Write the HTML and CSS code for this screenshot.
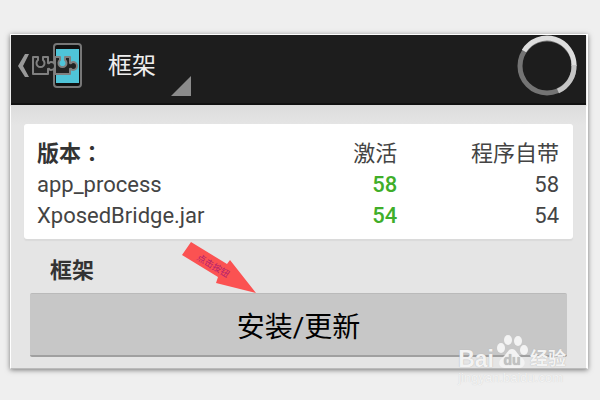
FILE: index.html
```
<!DOCTYPE html>
<html lang="zh-CN">
<head>
  <meta charset="UTF-8" />
  <meta name="viewport" content="width=device-width, initial-scale=1.0"/>
  <title>框架</title>
  <link rel="stylesheet" href="styles.css">
</head>
<body>
  <div class="screen">
    <header>
      <a href="#" class="home" aria-label="返回">
        <svg width="66" height="48" viewBox="0 0 66 48" fill="none">
          <path d="M11 12 H7 L0 24 L7 35 H11 L5 24 Z" fill="#999"/>
          <rect x="36" y="2" width="27" height="43" rx="3" fill="#111" stroke="#777" stroke-width="2"/>
          <rect x="38" y="7" width="23" height="34" fill="#4fc4d8"/>
          <g stroke="#808080" stroke-width="2" stroke-linejoin="round" fill="#222">
            <path d="M37 15 H42 V18 A4 4 0 1 0 47 18 V15 H52 V21 C54 22 53 20 55 20 A3 3 0 1 1 55 28 C53 28 54 26 52 27 V32 H37 Z"/>
            <path d="M15 15 H20 V18 A4 4 0 1 0 25 18 V15 H30 V21 C32 22 31 20 33 20 A3 3 0 1 1 33 28 C31 28 32 26 30 27 V32 H15 Z"/>
          </g>
        </svg>
      </a>
      <button type="button" class="dropdown">
        框架
        <svg width="20" height="20" viewBox="0 0 20 20"><path d="M20 0 V20 H0 Z" fill="#8b8b8b"/></svg>
      </button>
      <svg class="spinner" width="62" height="62" viewBox="0 0 62 62" fill="none" stroke-width="5">
        <circle cx="31" cy="31" r="27" stroke="#747474"/>
        <path d="M8 16 A27 27 0 0 1 58 31" stroke="#dedede"/>
        <path d="M58 30 A27 27 0 0 1 42 56" stroke="#c5c5c5"/>
      </svg>
    </header>

    <main>
      <table class="versions">
        <thead>
          <tr><th scope="col" class="name">版本<span lang="zh-TW" class="colon">：</span></th><th scope="col">激活</th><th scope="col">程序自带</th></tr>
        </thead>
        <tbody>
          <tr><td>app_process</td><td class="active">58</td><td>58</td></tr>
          <tr><td>XposedBridge.jar</td><td class="active">54</td><td>54</td></tr>
        </tbody>
      </table>

      <section>
        <h2>框架</h2>
        <button type="button" class="install">安装/更新</button>
        <svg class="arrow" width="76" height="54" viewBox="0 0 76 54">
          <path d="M10 1 L46 23 L49 19 L75 52 L35 42 L37 36 L1 14 Z" fill="#fb5252"/>
          <text x="32" y="28" transform="rotate(31 32 25)">点击按钮</text>
        </svg>
      </section>
    </main>

    <div class="watermark">
      <div class="brand">
        <span>Bai</span>
        <svg width="32" height="35" viewBox="0 0 32 35">
          <ellipse cx="5" cy="14" rx="4" ry="5"/>
          <ellipse cx="12" cy="6" rx="4" ry="5"/>
          <ellipse cx="22" cy="7" rx="4" ry="5"/>
          <ellipse cx="28" cy="16" rx="4" ry="5"/>
          <path d="M16 15 C20 15 21 20 25 23 C31 27 29 34 23 34 H9 C3 34 1 28 6 24 C11 20 12 15 16 15 Z"/>
          <text x="16" y="31">du</text>
        </svg>
        <span class="cn">经验</span>
      </div>
      <div class="site">jingyan.baidu.com</div>
    </div>
  </div>
</body>
</html>
```
FILE: styles.css
```
* {
  box-sizing: border-box;
}

body {
  margin: 0;
  padding: 34px 12px 32px 10px;
  background: #efefef;
  color: #444;
  font-family: Roboto, "Noto Sans CJK SC", sans-serif;
  font-size: 22px;
}

.screen {
  position: relative;
  border: 1px solid #fff;
  border-right-width: 2px;
  border-bottom-color: #bbb;
  background: #e5e5e5;
  box-shadow: 0 1px 5px rgba(0,0,0,0.5);
}

header {
  display: flex;
  align-items: center;
  height: 70px;
  padding: 0 8px 6px 7px;
  background: #1d1d1d;
  border-bottom: 2px solid #111;
  box-shadow: 0 1px 1px #999;
}

.home,
.home svg,
.spinner,
.arrow {
  display: block;
}

button {
  border: none;
  font-family: inherit;
  cursor: pointer;
}

.dropdown {
  display: flex;
  align-items: center;
  height: 60px;
  margin-left: 24px;
  padding: 0;
  gap: 15px;
  background: none;
  color: #eee;
  font-size: 24px;
  line-height: 24px;
}

.dropdown svg {
  align-self: flex-end;
}

.spinner {
  margin-left: auto;
}

main {
  padding: 19px 13px 11px;
  background: linear-gradient(#dcdcdc, #e5e5e5 20px);
}

.versions {
  width: 100%;
  padding: 14px 14px 8px 13px;
  border-spacing: 0;
  border-radius: 3px;
  background: #fff;
  box-shadow: 0 2px 1px #dadada;
  table-layout: fixed;
}

.versions th,
.versions td {
  height: 31px;
  padding: 0;
  font-weight: normal;
  line-height: 31px;
  text-align: right;
}

.versions th:first-child,
.versions td:first-child {
  width: 38%;
  text-align: left;
}

.versions th:last-child {
  width: 31%;
}

.versions .name {
  color: #333;
  font-weight: bold;
}

.versions .colon {
  font-family: "Noto Sans CJK TC", sans-serif;
  line-height: 1;
}

.versions .active {
  color: #3fae29;
  font-weight: 500;
}

section {
  position: relative;
  padding: 16px 6px 0;
}

h2 {
  margin: 0 0 6px 20px;
  color: #333;
  font-size: 22px;
  font-weight: bold;
  line-height: 32px;
}

.install {
  display: block;
  width: 100%;
  height: 64px;
  padding: 0;
  border-top: 1px solid #bababa;
  border-bottom: 2px solid #a0a0a0;
  border-radius: 2px;
  background: #c7c7c7;
  color: #000;
  font-size: 28px;
}

.arrow {
  position: absolute;
  top: 2px;
  left: 157px;
}

.arrow text {
  fill: #b02070;
  font-size: 9px;
  text-anchor: middle;
}

.watermark {
  position: absolute;
  right: 20px;
  bottom: -19px;
  color: #f3f3f3;
  font-family: "Liberation Sans", "Noto Sans CJK SC", sans-serif;
  font-weight: bold;
  text-shadow: 0 0 1px #aaa;
}

.brand {
  display: flex;
  align-items: flex-end;
  gap: 2px;
  font-size: 23px;
  line-height: 20px;
}

.brand svg {
  fill: #f3f3f3;
}

.brand svg text {
  fill: #c2c2c2;
  font-size: 14px;
  text-anchor: middle;
}

.brand .cn {
  font-size: 18px;
}

.site {
  font-size: 13px;
  font-weight: normal;
  line-height: 18px;
  text-shadow: 0 0 1px #ccc;
}
```
